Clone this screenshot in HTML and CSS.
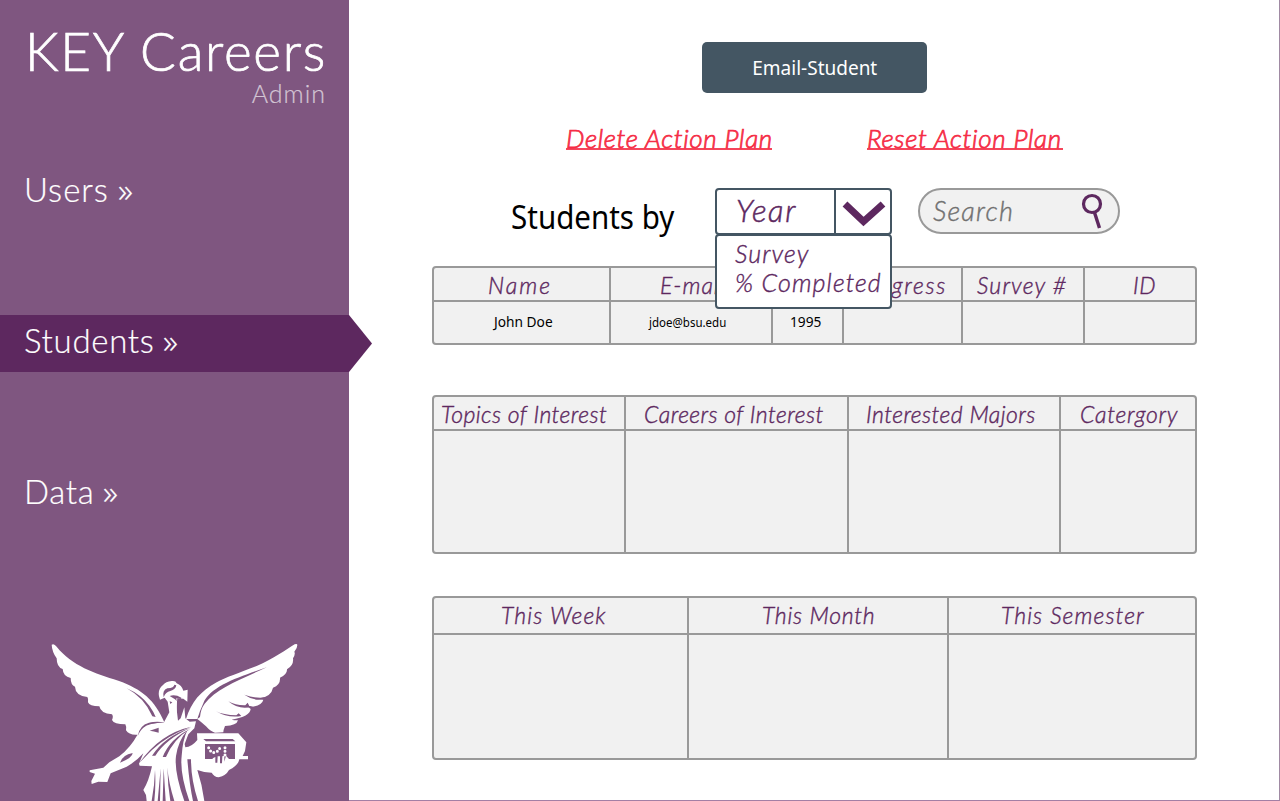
FILE: index.html
```
<!DOCTYPE html>
<html lang="en">
<head>
<meta charset="utf-8">
<title>KEY Careers Admin</title>
<link rel="stylesheet" href="styles.css">
</head>
<body>
<aside class="sidebar">
  <header class="brand">
    <h1 class="brand-name">KEY Careers</h1>
    <p class="brand-role">Admin</p>
  </header>
  <nav class="nav">
    <a class="nav-item nav-users">Users <span class="more">»</span></a>
    <a class="nav-item nav-students">Students <span class="more">»</span></a>
    <a class="nav-item nav-data">Data <span class="more">»</span></a>
  </nav>
  <svg class="angel" viewBox="0 0 795 498" width="265" height="166">
    <g fill="#fff">
      <path d="M35 29Q42 24 50 35C95 92 165 115 235 137C305 162 345 195 373 262L332 263Q305 270 295 299Q268 302 258 286Q260 275 256 268Q222 268 216 255Q221 245 216 238Q182 236 178 214Q148 214 144 202Q146 192 142 186Q106 182 105 155Q92 150 92 129Q69 124 68 102Q50 97 50 70Q36 50 35 29Z"/>
      <path d="M772 30Q772 26 764 28C740 43 700 72 650 93C600 113 555 127 530 142C480 170 455 200 438 252L472 252Q485 262 498 274Q512 290 525 293L550 292Q550 285 555 273Q590 272 594 256Q580 256 575 254Q630 245 632 222L625 216Q665 215 670 194Q660 193 655 191Q694 186 699 158Q722 150 720 128Q742 118 741 103Q762 90 759 70Q767 58 763 50Q772 40 772 30Z"/>
      <path d="M357 184Q353 162 369 150Q377 140 395 138Q407 136 410 145Q425 151 430 167L443 164L442 200L430 191L412 190Q410 205 411 232L414 257L422 250L433 217L436 250L449 260L468 259L463 280L445 298L434 327L436 337Q455 336 472 315L471 295L595 295L619 322L615 348L608 363L624 363L624 373L598 373Q595 391 567 405Q558 422 536 427Q522 425 515 413Q492 413 472 405Q487 451 493 498L320 498L318 480L310 465Q326 440 336 394L299 392L297 386L310 355Q290 378 260 395L212 415L202 441L175 440L155 447L154 438L165 416L149 411L149 406L190 398L208 382L238 364Q272 337 292 300Q300 275 330 266L372 262L388 232L383 200L374 188L360 194Z"/>
    </g>
    <g fill="#7f5680">
      <path d="M260 160Q302 178 328 212Q341 230 347 246L337 244Q313 188 260 160Z"/>
      <path d="M293 303Q298 271 327 263Q348 258 374 262Q326 265 310 278Q301 285 293 303Z"/>
      <path d="M329 287L356 278L356 293Q341 288 329 287Z"/>
      <path d="M240 383Q248 359 278 354Q278 368 240 383Z"/>
      <path d="M371 187Q366 166 382 160Q403 158 403 149L409 151Q407 164 391 168Q377 170 371 187Z"/>
      <path d="M389 183Q405 177 424 188L423 192L409 190L410 198L405 193ZM389 199L397 202L391 207Z"/>
      <path d="M454 275Q360 295 297 385Q322 359 336 345Q380 302 454 275Z"/>
      <path d="M452 278Q375 303 336 362L346 362Q377 312 452 278ZM450 282Q390 311 368 366L378 366Q401 312 450 282ZM442 286Q415 317 408 363Q402 410 433 498L448 498Q419 415 425 363Q428 315 442 286Z"/>
      <path d="M442 373Q448 447 459 498L474 498Q453 434 453 373ZM345 405Q344 450 335 498L343 498Q348 450 345 405ZM362 400L353 498L360 498ZM371 400L368 498L377 498ZM382 397Q383 450 391 498L403 498Q386 445 382 397Z"/>
      <path d="M680 97C600 125 510 153 490 205Q480 226 472 252L480 246Q482 222 494 206C530 160 600 134 680 97Z"/>
      <path d="M613 179Q645 191 676 187L671 193Q642 199 613 179ZM565 199Q588 212 616 211L623 203L628 213L640 214Q599 228 565 199ZM528 229Q550 240 589 241L596 235L604 243Q564 250 528 229Z"/>
      <path d="M490 312L578 312L586 319L498 319ZM495 327H585V372H567L558 362L553 380V362L547 364L546 385H540V364L533 364L532 383H526V366L518 370V372H495Z"/>
    </g>
    <path fill="none" stroke="#fff" stroke-width="9" stroke-linecap="round" stroke-dasharray="0 11" d="M506 338Q512 354 524 352Q536 350 541 336M555 338V363"/>
  </svg>
</aside>
<main class="main">
  <button class="email"><span>Email-Student</span></button>
  <div class="actions">
    <a class="action delete">Delete Action Plan</a>
    <a class="action reset">Reset Action Plan</a>
  </div>
  <div class="filters">
    <h2 class="filter-label">Students by</h2>
    <div class="select">
      <span class="select-value">Year</span>
      <span class="select-arrow"><svg width="54" height="42" viewBox="0 0 54 42"><path d="M9 14L27.500 31.500L47 14" fill="none" stroke="#5d285f" stroke-width="7"/></svg></span>
      <div class="menu"><span class="option-survey">Survey</span><span class="option-completed">% Completed</span></div>
    </div>
    <div class="search"><span>Search</span>
      <svg width="24" height="40" viewBox="0 0 24 40"><circle cx="11" cy="14" r="8.500" fill="none" stroke="#5d285f" stroke-width="3.200"/><path d="M13.500 22.500L18.500 38" stroke="#5d285f" stroke-width="3.400"/></svg>
    </div>
  </div>
  <section class="grid students">
    <div class="head h-name">Name</div><div class="head h-email">E-mail</div><div class="head"></div><div class="head h-progress">Progress</div><div class="head h-survey">Survey #</div><div class="head h-id">ID</div>
    <div class="cell c-name"><span>John Doe</span></div><div class="cell c-email"><span>jdoe@bsu.edu</span></div><div class="cell c-year"><span>1995</span></div><div class="cell"></div><div class="cell"></div><div class="cell"></div>
  </section>
  <section class="grid interests">
    <div class="head h-topics">Topics of Interest</div><div class="head h-careers">Careers of Interest</div><div class="head h-majors">Interested Majors</div><div class="head h-category">Catergory</div>
    <div class="cell"></div><div class="cell"></div><div class="cell"></div><div class="cell"></div>
  </section>
  <section class="grid periods">
    <div class="head h-week">This Week</div><div class="head h-month">This Month</div><div class="head h-semester">This Semester</div>
    <div class="cell"></div><div class="cell"></div><div class="cell"></div>
  </section>
</main>
</body>
</html>
```
FILE: styles.css
```
* { box-sizing: border-box; }
body {
  margin: 0;
  height: 801px;
  overflow: hidden;
  display: flex;
  background: #fff;
  font-family: Lato, sans-serif;
  font-weight: 300;
  white-space: nowrap;
}
h1, h2, p { margin: 0; font-weight: 300; }

.sidebar {
  width: 349px;
  height: 801px;
  flex: none;
  display: flex;
  flex-direction: column;
  background: #7f5680;
  color: #fff;
}
.brand { height: 164px; padding: 19px 23px 0 0; text-align: right; }
.brand-name { font-size: 53px; line-height: 63px; letter-spacing: 1.700px; margin-right: -1px; -webkit-text-stroke: .7px; }
.brand-role { font-size: 25px; line-height: 22px; letter-spacing: 1px; color: #d3c5d4; -webkit-text-stroke: .2px; }
.nav { height: 471px; display: flex; flex-direction: column; gap: 94px; }
.nav-item {
  height: 57px;
  padding-left: 24px;
  font-size: 33px;
  line-height: 51px;
  letter-spacing: .7px;
  -webkit-text-stroke: .2px;
}
.nav-students {
  width: 372px;
  background: #5d285f;
  clip-path: polygon(0 0, 349px 0, 372px 28.500px, 349px 57px, 0 57px);
}
.nav-users { letter-spacing: 1px; }
.more { display: inline-block; margin-left: -3px; transform: scaleX(1.400); transform-origin: left; }
.angel { margin-left: 40px; flex: none; }

.main {
  flex: 1;
  padding: 42px 0 0 83px;
  border-right: 1px solid #a08aa3;
  border-bottom: 1px solid #a37fa5;
}
.email {
  display: block;
  width: 225px;
  height: 51px;
  margin-left: 270px;
  padding: 0;
  border: 0;
  border-radius: 5px;
  background: #445663;
  color: #fff;
  font: 400 20px/51px "Noto Sans", sans-serif;
}
.email span { display: inline-block; transform: scaleX(.95); }
.actions { display: flex; height: 95px; padding: 30px 0 0 134px; gap: 95px; }
.action {
  font-size: 26px;
  line-height: 30px;
  height: 27px;
  border-bottom: 2px solid #f5455a;
  font-style: italic;
  color: #f52d46;
  -webkit-text-stroke: .75px;
}
.delete { width: 206px; letter-spacing: .650px; }
.reset { width: 196px; letter-spacing: .650px; }

.filters { display: flex; height: 78px; }
.filter-label {
  width: 204px;
  margin-left: 79px;
  font: 400 32px/57px "Noto Sans", sans-serif;
  transform: scaleX(.923);
  transform-origin: left;
}
.select {
  position: relative;
  width: 177px;
  height: 47px;
  display: flex;
  border: 2px solid #445663;
  border-radius: 4px;
  color: #5d285f;
  font-style: italic;
}
.select-value { width: 118px; padding-left: 19px; font-size: 31px; line-height: 40px; letter-spacing: 1.700px; -webkit-text-stroke: .5px; }
.select-arrow { flex: 1; border-left: 2px solid #445663; }
.select-arrow svg { display: block; }
.menu {
  position: absolute;
  z-index: 1;
  left: -2px;
  top: 44px;
  width: 177px;
  height: 75px;
  padding: 3px 0 0 18px;
  display: flex;
  flex-direction: column;
  border: 2px solid #445663;
  border-radius: 4px;
  background: #fff;
  font-size: 25px;
  line-height: 29px;
  letter-spacing: 1.100px;
  -webkit-text-stroke: .4px;
}
.search {
  width: 202px;
  height: 46px;
  margin: 0 0 0 26px;
  padding: 0 13px 0 13px;
  display: flex;
  justify-content: space-between;
  border: 2px solid #999;
  border-radius: 23px;
  background: #f1f1f1;
  color: #707070;
  font-size: 27px;
  font-style: italic;
  line-height: 42px;
  letter-spacing: 1.200px;
  -webkit-text-stroke: .4px;
}

.grid {
  width: 765px;
  display: grid;
  border: 2px solid #999;
  border-radius: 4px;
  background: #f1f1f1;
}
.students { height: 79px; grid-template: 32px 1fr / 175px 162px 71px 119px 122px 112px; }
.interests { height: 159px; margin-top: 50px; grid-template: 32px 1fr / 190px 223px 212px 136px; }
.periods { height: 164px; margin-top: 42px; grid-template: 35px 1fr / 253px 260px 248px; }
.head, .cell { border-left: 2px solid #999; }
.cell { border-top: 2px solid #999; }
.students > :nth-child(6n+1), .interests > :nth-child(4n+1), .periods > :nth-child(3n+1) { border-left: 0; }
.head {
  color: #5d285f;
  font-size: 23px;
  font-style: italic;
  line-height: 34px;
  letter-spacing: .45px;
  -webkit-text-stroke: .4px;
}
.students .head { line-height: 35px; }
.h-name { padding-left: 54px; letter-spacing: 2px; }
.h-email { padding-left: 49px; letter-spacing: 1px; }
.h-progress { padding-left: 12px; letter-spacing: 1.700px; }
.h-survey { padding-left: 14px; letter-spacing: 1.150px; }
.h-id { padding-left: 48px; }
.h-topics { padding-left: 7px; }
.h-careers { padding-left: 18px; }
.h-majors { padding-left: 17px; }
.h-category { padding-left: 19px; letter-spacing: .7px; }
.h-week { padding-left: 67px; letter-spacing: 1.150px; }
.h-month { padding-left: 73px; letter-spacing: .750px; }
.h-semester { padding-left: 52px; letter-spacing: 1.100px; }
.cell { font: 400 14px/40px "Noto Sans", sans-serif; }
.cell span { display: inline-block; transform: scaleX(.98); transform-origin: left; }
.c-name { padding-left: 60px; }
.cell.c-email { padding-left: 38px; font-size: 12.500px; line-height: 41px; }
.c-email span { transform: scaleX(.92); }
.c-year { padding-left: 17px; }
```
